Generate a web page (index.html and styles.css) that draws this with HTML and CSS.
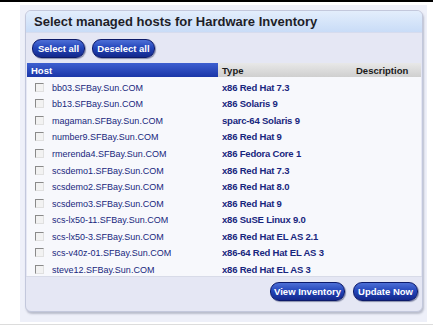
FILE: index.html
```html
<!DOCTYPE html>
<html>
<head>
<meta charset="utf-8">
<link rel="stylesheet" href="styles.css">
</head>
<body>
<div class="topline"></div>
<div class="outer">
  <div class="panel">
    <div class="title">Select managed hosts for Hardware Inventory</div>
    <div class="toolbar">
      <button class="btn">Select all</button>
      <button class="btn">Deselect all</button>
    </div>
    <table class="grid">
      <thead>
        <tr>
          <th class="h-host">Host</th>
          <th class="h-type">Type</th>
          <th class="h-desc">Description</th>
        </tr>
      </thead>
      <tbody>
        <tr><td class="c-host"><span class="cb"></span>bb03.SFBay.Sun.COM</td><td class="c-type">x86 Red Hat 7.3</td><td></td></tr>
        <tr><td class="c-host"><span class="cb"></span>bb13.SFBay.Sun.COM</td><td class="c-type">x86 Solaris 9</td><td></td></tr>
        <tr><td class="c-host"><span class="cb"></span>magaman.SFBay.Sun.COM</td><td class="c-type">sparc-64 Solaris 9</td><td></td></tr>
        <tr><td class="c-host"><span class="cb"></span>number9.SFBay.Sun.COM</td><td class="c-type">x86 Red Hat 9</td><td></td></tr>
        <tr><td class="c-host"><span class="cb"></span>rmerenda4.SFBay.Sun.COM</td><td class="c-type">x86 Fedora Core 1</td><td></td></tr>
        <tr><td class="c-host"><span class="cb"></span>scsdemo1.SFBay.Sun.COM</td><td class="c-type">x86 Red Hat 7.3</td><td></td></tr>
        <tr><td class="c-host"><span class="cb"></span>scsdemo2.SFBay.Sun.COM</td><td class="c-type">x86 Red Hat 8.0</td><td></td></tr>
        <tr><td class="c-host"><span class="cb"></span>scsdemo3.SFBay.Sun.COM</td><td class="c-type">x86 Red Hat 9</td><td></td></tr>
        <tr><td class="c-host"><span class="cb"></span>scs-lx50-11.SFBay.Sun.COM</td><td class="c-type">x86 SuSE Linux 9.0</td><td></td></tr>
        <tr><td class="c-host"><span class="cb"></span>scs-lx50-3.SFBay.Sun.COM</td><td class="c-type">x86 Red Hat EL AS 2.1</td><td></td></tr>
        <tr><td class="c-host"><span class="cb"></span>scs-v40z-01.SFBay.Sun.COM</td><td class="c-type">x86-64 Red Hat EL AS 3</td><td></td></tr>
        <tr><td class="c-host"><span class="cb"></span>steve12.SFBay.Sun.COM</td><td class="c-type">x86 Red Hat EL AS 3</td><td></td></tr>
      </tbody>
    </table>
    <div class="footer">
      <button class="btn btn-view">View Inventory</button>
      <button class="btn btn-update">Update Now</button>
    </div>
  </div>
</div>
<div class="bottomline"></div>
</body>
</html>
```
FILE: styles.css
```css
html, body {
  margin: 0;
  padding: 0;
  background: #ffffff;
  font-family: "Liberation Sans", Arial, sans-serif;
}
.topline {
  height: 2px;
  background: #000000;
}
.outer {
  margin: 3px 6px 0 20px;
  padding: 5px 4px 10px 5px;
  background: #eef0f9;
}
.panel {
  border: 1px solid #c3c8dc;
  border-radius: 6px;
  background: #e5e7f4;
  box-shadow: 1px 2px 2px rgba(90, 95, 120, 0.35);
  overflow: hidden;
  height: 300px;
  display: flex;
  flex-direction: column;
}
.title {
  height: 21px;
  flex: none;
  padding-left: 8px;
  display: flex;
  align-items: center;
  font-weight: bold;
  font-size: 13px;
  color: #1e1e28;
  background: linear-gradient(#e3eefc, #c9dcf7);
  border-bottom: 1px solid #d6dcee;
}
.toolbar {
  height: 30px;
  flex: none;
  display: flex;
  align-items: center;
  gap: 7px;
  padding-left: 6px;
}
.btn {
  height: 19px;
  padding: 0 8px;
  border: 1px solid #0c1a6a;
  border-radius: 9px;
  background: linear-gradient(#4d6fd6 0%, #2547bb 45%, #13288c 100%);
  color: #ffffff;
  font-family: "Liberation Sans", Arial, sans-serif;
  font-weight: bold;
  font-size: 9.5px;
  box-shadow: 1px 1px 1px rgba(20, 30, 80, 0.45);
  line-height: 17px;
}
.toolbar .btn:first-child { width: 53px; padding: 0; }
.toolbar .btn:last-child { width: 63px; padding: 0; }
.grid {
  flex: none;
  margin: 0 1px;
  width: 394px;
  border-collapse: collapse;
  table-layout: fixed;
  background: #f7f8fc;
}
.grid th {
  height: 14px;
  padding: 0 0 0 4px;
  text-align: left;
  font-size: 9.5px;
  font-weight: bold;
}
.h-host {
  width: 187px;
  color: #ffffff;
  background: linear-gradient(#3d5fd0, #1a36a8);
}
.h-type {
  width: 130px;
  color: #1a1a1a;
  background: linear-gradient(#e8e8e8, #cfcfcf);
}
.h-desc {
  color: #1a1a1a;
  background: linear-gradient(#e8e8e8, #cfcfcf);
}
.grid td {
  height: 11.55px;
  padding: 5px 0 0 0;
  font-size: 9px;
  line-height: 10px;
  white-space: nowrap;
  overflow: hidden;
}
.c-host {
  padding-left: 8px !important;
  color: #17277c;
}
.c-type {
  padding-left: 4px !important;
  color: #17267e;
  font-weight: bold;
  font-size: 9.5px !important;
  letter-spacing: -0.2px;
}
.cb {
  display: inline-block;
  width: 7px;
  height: 7px;
  margin-right: 8px;
  vertical-align: -1px;
  border-top: 1px solid #8a8a8a;
  border-left: 1px solid #8a8a8a;
  border-right: 1px solid #e0e0e0;
  border-bottom: 1px solid #e0e0e0;
  background: #f2f2f2;
}
.footer {
  flex: 1;
  display: flex;
  justify-content: flex-end;
  align-items: flex-start;
  gap: 8px;
  padding: 5px 4px 0 0;
  border-top: 1px solid #d8dbe8;
}
.btn-view { width: 75px; padding: 0; }
.btn-update { width: 65px; padding: 0; }
.bottomline {
  margin-top: 2px;
  height: 1px;
  background: #dcdcdc;
}
```
